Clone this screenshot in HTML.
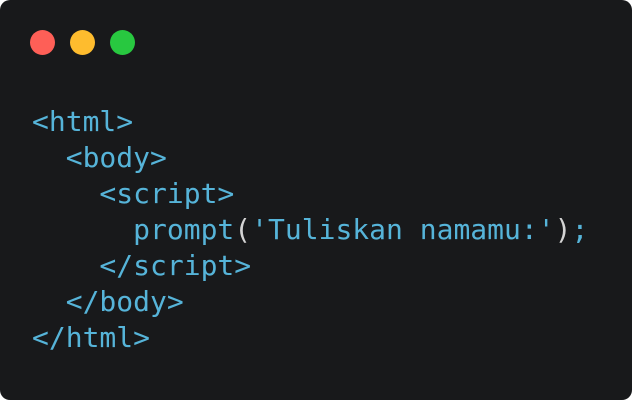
<!DOCTYPE html>
<html><head><style>
html,body{margin:0;padding:0;background:#fff;}
.win{position:absolute;left:0;top:0;width:632px;height:400px;background:#18191b;border-radius:10px;overflow:hidden;}
.d{position:absolute;top:30px;width:25px;height:25px;border-radius:50%;}
pre{position:absolute;left:32px;top:104px;margin:0;font-family:"DejaVu Sans Mono","Liberation Mono",monospace;font-size:28px;line-height:36px;color:#56b4d9;}
.p{color:#d4d4d4;}
</style></head><body>
<div class="win">
<div class="d" style="left:30px;background:#fe5f57"></div>
<div class="d" style="left:70px;background:#febc2e"></div>
<div class="d" style="left:110px;background:#28c840"></div>
<pre>&lt;html&gt;
  &lt;body&gt;
    &lt;script&gt;
      prompt<span class="p">(</span>'Tuliskan namamu:'<span class="p">)</span>;
    &lt;/script&gt;
  &lt;/body&gt;
&lt;/html&gt;</pre>
</div>
</body></html>
